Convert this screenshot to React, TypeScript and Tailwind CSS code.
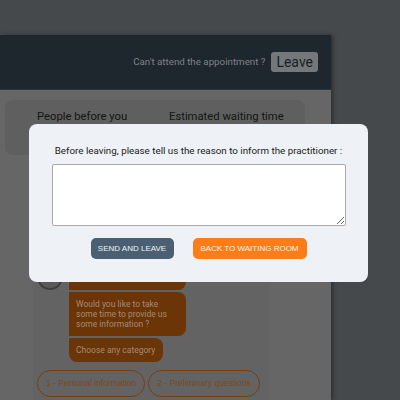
const font = { fontFamily: 'Roboto, "Liberation Sans", sans-serif' }

const messages = [
  'Would you like to take some time to provide us some information ?',
  'Choose any category',
]

const categories = ['1 - Personal information', '2 - Preliminary questions']

export default function App() {
  return (
    <div className="relative h-[400px] w-[400px] overflow-hidden bg-[#45494c]" style={font}>
      {/* waiting room page (dimmed behind the dialog) */}
      <div className="pt-[35px]">
        <div className="h-[365px] w-[331px] bg-[#666666] shadow-[2px_0_4px_rgba(0,0,0,0.35)]">
          <header className="flex h-[55px] items-center justify-end gap-[6px] border-b border-[#2b343a] bg-[#1e272e] pr-[13px]">
            <span className="whitespace-nowrap text-[9.75px] text-[#7d8286]">Can't attend the appointment ?</span>
            <button className="h-[20px] rounded-[3px] bg-[#74787b] px-[5px] text-[14px] leading-[20px] text-[#1a1e22]">
              Leave
            </button>
          </header>

          <div className="px-[5px] pt-[10px]">
            <div className="flex h-[55px] w-[300px] rounded-lg bg-[#5f5f5f] pt-[9px] text-[11.25px] text-[#141414]">
              <span className="ml-[32px] w-[132px]">People before you</span>
              <span>Estimated waiting time</span>
            </div>
          </div>

          <div className="ml-[33px] mt-[8px] flex h-[250px] w-[237px] flex-col bg-[#636363] pl-[4px] pt-[101px]">
            <div className="flex items-end gap-[6px]">
              <div className="h-[26px] w-[26px] shrink-0 rounded-full border-2 border-[#3f3f3f] bg-[#5a5a5a]" />
              <div className="h-[24px] w-[117px] rounded-r-lg bg-[#6b3507]" />
            </div>
            <div className="ml-[32px] mt-[2px] flex flex-col items-start gap-[2px]">
              <div className="w-[117px] rounded-r-lg bg-[#6b3507] px-[7px] py-[7px] text-[8.5px] leading-[10px] text-[#a48a74]">
                {messages[0]}
              </div>
              <div className="rounded-r-lg rounded-bl-lg bg-[#6b3507] py-[7px] pl-[7px] pr-[8px] text-[8.5px] leading-[10px] text-[#a48a74]">
                {messages[1]}
              </div>
            </div>
            <div className="mt-[8px] flex gap-[3px]" style={{ fontFamily: '"Liberation Sans", Arial, sans-serif' }}>
              {categories.map((c) => (
                <button
                  key={c}
                  className="h-[27px] whitespace-nowrap rounded-full border-[1.5px] border-[#7a3d0c] px-[8px] text-[8.5px] text-[#7e4818]"
                >
                  {c}
                </button>
              ))}
            </div>
          </div>
        </div>
      </div>

      {/* leave dialog */}
      <div className="absolute inset-0">
        <div className="ml-[29px] mt-[124px] flex h-[158px] w-[339px] flex-col items-center rounded-lg bg-[#eef2f6] px-[23px] pt-[20px]">
          <p className="whitespace-nowrap text-[9.8px] leading-[13px] text-[#1a1a1a]">
            Before leaving, please tell us the reason to inform the practitioner :
          </p>
          <textarea className="mt-[7px] h-[62px] w-[294px] rounded-[2px] border border-[#a9a9a9] bg-white" />
          <div className="mt-[12px] flex gap-[19px]" style={{ fontFamily: '"Liberation Sans", Arial, sans-serif' }}>
            <button className="h-[21px] w-[83px] whitespace-nowrap rounded-[5px] bg-[#4a6072] text-[8px] uppercase text-[#eef2f6]">
              Send and leave
            </button>
            <button className="h-[21px] w-[114px] whitespace-nowrap rounded-[5px] bg-[#fa7d19] text-[8px] uppercase text-[#fff3e8]">
              Back to waiting room
            </button>
          </div>
        </div>
      </div>
    </div>
  )
}
